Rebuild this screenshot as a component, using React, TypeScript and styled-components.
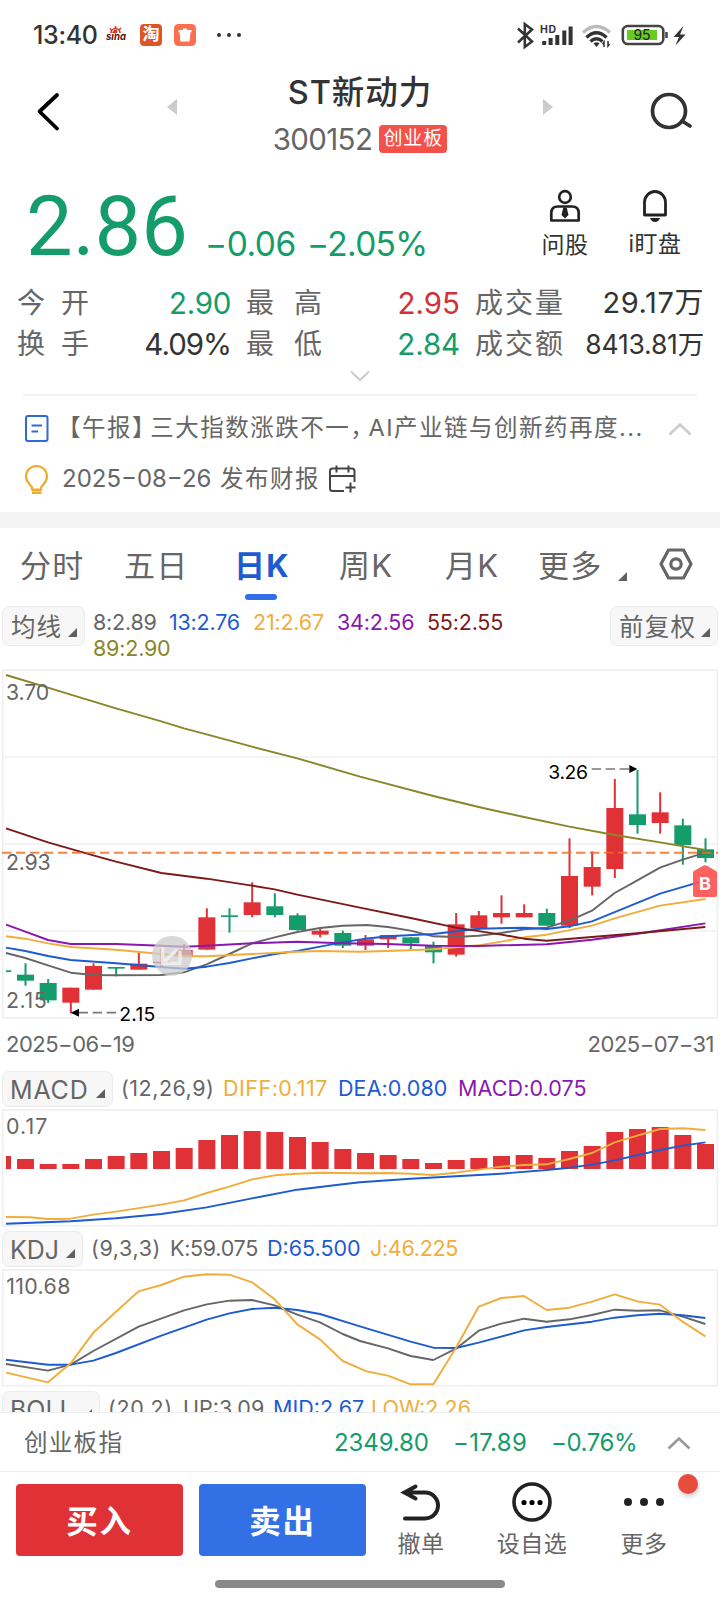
import React from "react";
import styled, { createGlobalStyle } from "styled-components";

const RED = "#e03136";
const GREEN = "#149c6a";
const BLUE = "#1d5bd0";
const ORANGE = "#f0ad3c";
const PURPLE = "#8a18b0";
const MAROON = "#7c1a1a";
const OLIVE = "#87872a";
const GRAY = "#666666";
const DARK = "#333333";

const GlobalStyle = createGlobalStyle`
  * { box-sizing: border-box; }
  html, body { margin: 0; padding: 0; background: #fff; }
  body {
    font-family: Inter, "Noto Sans CJK SC", sans-serif;
    color: ${DARK};
    overflow: hidden;
  }
  svg { display: block; flex: none; overflow: visible; }
`;

const Screen = styled.div`
  width: 720px;
  height: 1600px;
  display: flex;
  flex-direction: column;
  background: #fff;
  overflow: hidden;
`;

interface TextProps {
  $size?: number;
  $color?: string;
  $ls?: number;
  $weight?: number;
  $w?: number;
}

const Text = styled.span<TextProps>`
  display: block;
  flex: none;
  white-space: nowrap;
  font-size: ${(p) => p.$size ?? 24}px;
  line-height: 1.2;
  color: ${(p) => p.$color ?? GRAY};
  letter-spacing: ${(p) => p.$ls ?? 0}px;
  font-weight: ${(p) => p.$weight ?? 400};
  width: ${(p) => (p.$w ? `${p.$w}px` : "auto")};
`;

/* ---------- status bar ---------- */

const StatusBar = styled.div`
  flex: none;
  height: 68px;
  display: flex;
  align-items: center;
  padding: 1px 33px 0 33px;
`;
const StatusIcons = styled.div`
  display: flex;
  align-items: center;
  gap: 12px;
  margin-left: 3px;
`;
const StatusRight = styled.div`
  margin-left: auto;
  display: flex;
  align-items: center;
`;
const AppTile = styled.div`
  width: 22px;
  height: 22px;
  border-radius: 4px;
  background: #de5626;
  color: #fff;
  font-size: 17px;
  font-weight: 700;
  line-height: 20px;
  text-align: center;
`;

/* ---------- header ---------- */

const Header = styled.div`
  flex: none;
  height: 104px;
  display: grid;
  grid-template-columns: 167px 1fr 167px;
`;
const HeaderSide = styled.div<{ $right?: boolean }>`
  display: flex;
  justify-content: ${(p) => (p.$right ? "flex-end" : "flex-start")};
  padding: 22px ${(p) => (p.$right ? 25 : 0)}px 0 ${(p) => (p.$right ? 0 : 35)}px;
`;
const HeaderCenter = styled.div`
  display: flex;
  justify-content: space-between;
`;
const Pager = styled.div`
  padding-top: 30px;
`;
const TitleBlock = styled.div`
  display: flex;
  flex-direction: column;
  align-items: center;
  padding-top: 5px;
`;
const CodeRow = styled.div`
  display: flex;
  align-items: center;
  gap: 7px;
  margin-top: 10px;
`;
const BoardTag = styled.span`
  width: 68px;
  height: 28px;
  border-radius: 4px;
  background: #f4514a;
  color: #fff;
  font-size: 19px;
  letter-spacing: 0.9px;
  line-height: 28px;
  text-align: center;
  white-space: nowrap;
  margin-top: -2px;
`;

/* ---------- quote ---------- */

const Quote = styled.div`
  flex: none;
  height: 108px;
  display: flex;
  padding-left: 26px;
`;
const Price = styled.div`
  width: 179px;
  font-family: Roboto, sans-serif;
  font-size: 83px;
  line-height: 100px;
  padding-top: 5px;
  color: ${GREEN};
`;
const Change = styled.div`
  flex: 1;
  display: flex;
  padding-top: 52px;
  color: ${GREEN};
`;
const QuoteAction = styled.div<{ $w: number; $gap: number }>`
  width: ${(p) => p.$w}px;
  display: flex;
  flex-direction: column;
  align-items: center;
  gap: ${(p) => p.$gap}px;
  padding-top: 17px;
`;
const QuoteActions = styled.div`
  display: flex;
  padding-right: 20px;
`;

const Stats = styled.div`
  flex: none;
  display: grid;
  grid-template-columns: 71px 143px 15px 78px 136px 15px 90px 139px;
  grid-template-rows: 41px 41px;
  align-items: center;
  padding: 3px 16px 0 17px;
`;
const StatValue = styled(Text)`
  text-align: right;
`;

const Expand = styled.div`
  flex: none;
  height: 31px;
  margin: 0 23px;
  display: flex;
  justify-content: center;
  padding-top: 4px;
  border-bottom: 2px solid #f1f1f1;
`;

/* ---------- news ---------- */

const News = styled.div`
  flex: none;
  height: 116px;
  padding: 7px 28px 0 24px;
`;
const NewsRow = styled.div`
  height: 51px;
  display: flex;
  align-items: center;
`;
const NewsTitle = styled(Text)`
  margin-left: 8px;
`;
const HalfMark = styled.span<{ $gap: number }>`
  font-feature-settings: "halt";
  margin-right: ${(p) => p.$gap}px;
`;
const NewsToggle = styled.div`
  margin-left: auto;
`;
const ReportDate = styled(Text)`
  margin-left: 13px;
`;
const Band = styled.div`
  flex: none;
  height: 16px;
  background: #f4f4f4;
`;

/* ---------- tabs ---------- */

const Tabs = styled.div`
  flex: none;
  height: 74px;
  display: flex;
  padding-left: 20px;
`;
const Tab = styled.div<{ $w: number; $active?: boolean }>`
  width: ${(p) => p.$w}px;
  display: flex;
  flex-direction: column;
  gap: 8px;
  padding-top: 17px;
  font-size: 31px;
  line-height: 41px;
  letter-spacing: 1.2px;
  white-space: nowrap;
  font-weight: ${(p) => (p.$active ? 700 : 400)};
  color: ${(p) => (p.$active ? BLUE : GRAY)};
`;
const Underline = styled.i`
  width: 32px;
  height: 6px;
  border-radius: 3px;
  background: #3370e6;
  margin-left: 11px;
`;
const CornerMark = styled.i<{ $m?: string }>`
  flex: none;
  width: 0;
  height: 0;
  border-left: 9px solid transparent;
  border-bottom: 9px solid #5f5f5f;
  margin: ${(p) => p.$m ?? "0"};
`;

/* ---------- chart chrome ---------- */

const MaRow = styled.div`
  flex: none;
  height: 67px;
  display: flex;
  padding: 4px 2px 0 2px;
`;
const Picker = styled.div<{ $w: number; $h: number }>`
  flex: none;
  width: ${(p) => p.$w}px;
  height: ${(p) => p.$h}px;
  display: flex;
  align-items: center;
  justify-content: space-between;
  padding: 0 7px 0 8px;
  border: 1px solid #ececec;
  border-radius: 7px;
  background: #f7f7f7;
`;
const PickerLabel = styled(Text)`
  padding-top: 3px;
`;
const IndicatorLabel = styled(Text)`
  margin-left: -1px;
  padding-top: 1px;
`;
const MaValues = styled.div`
  flex: 1;
  display: flex;
  flex-wrap: wrap;
  align-content: flex-start;
  padding: 3px 60px 0 8px;
`;
const MaValue = styled(Text)`
  line-height: 26px;
`;
const Dates = styled.div`
  flex: none;
  height: 51px;
  display: flex;
  justify-content: space-between;
  padding: 12px 6px 0 6px;
`;
const IndicatorHead = styled.div<{ $top?: number }>`
  flex: none;
  height: ${(p) => 38 + (p.$top ?? 0)}px;
  display: flex;
  align-items: center;
  padding: ${(p) => p.$top ?? 0}px 0 0 2px;
`;
const IndicatorValues = styled.div`
  display: flex;
  margin-left: 8px;
`;
const Clipped = styled.div`
  flex: none;
  height: 24px;
  overflow: hidden;
`;

/* ---------- bottom ---------- */

const IndexBar = styled.div`
  flex: none;
  height: 60px;
  display: flex;
  align-items: center;
  padding: 2px 29px 0 24px;
  border-top: 1px solid #ececec;
  border-bottom: 1px solid #ececec;
`;
const IndexNumbers = styled.div`
  display: flex;
  margin-left: auto;
`;
const Actions = styled.div`
  flex: none;
  height: 97px;
  display: flex;
  padding: 12px 0 0 16px;
`;
const TradeButton = styled.div<{ $bg: string }>`
  width: 167px;
  height: 72px;
  margin-right: 16px;
  border-radius: 4px;
  background: ${(p) => p.$bg};
  color: #fff;
  font-size: 31.5px;
  font-weight: 700;
  letter-spacing: 1.8px;
  line-height: 76px;
  text-align: center;
`;
const Action = styled.div<{ $w: number }>`
  position: relative;
  width: ${(p) => p.$w}px;
  display: flex;
  flex-direction: column;
  align-items: center;
  gap: 8px;
  margin-top: -3px;
`;
const Badge = styled.i`
  position: absolute;
  left: 74px;
  top: -7px;
  width: 20px;
  height: 20px;
  border-radius: 50%;
  background: #e74c3e;
  box-shadow: 1px 3px 4px rgba(0, 0, 0, 0.18);
`;
const HomeBar = styled.div`
  flex: none;
  width: 290px;
  height: 8px;
  border-radius: 4px;
  background: #8a8a8a;
  margin: 11px 0 0 215px;
`;

/* ---------- data ---------- */

// [up, high, body top, body bottom, low] in chart units
type Candle = [boolean, number, number, number, number];
const candles: Candle[] = [
  [false, 910, 944, 962, 977],
  [false, 957, 969, 1021, 1029],
  [true, 983, 983, 1028, 1060],
  [true, 910, 918, 989, 989],
  [false, 921, 921, 926, 949],
  [true, 879, 911, 929, 929],
  [true, 865, 905, 910, 920],
  [true, 852, 870, 888, 890],
  [true, 745, 772, 869, 869],
  [false, 745, 766, 771, 818],
  [true, 667, 727, 765, 772],
  [false, 700, 739, 765, 772],
  [false, 760, 766, 810, 812],
  [true, 806, 812, 824, 832],
  [false, 812, 819, 857, 864],
  [true, 825, 838, 857, 870],
  [true, 825, 825, 838, 864],
  [false, 831, 832, 850, 868],
  [false, 845, 857, 877, 910],
  [true, 759, 793, 884, 890],
  [true, 753, 766, 805, 810],
  [true, 706, 759, 772, 791],
  [true, 733, 759, 772, 772],
  [false, 746, 759, 797, 797],
  [true, 535, 648, 797, 804],
  [true, 574, 621, 680, 706],
  [true, 357, 444, 627, 654],
  [false, 330, 463, 495, 521],
  [true, 397, 457, 489, 521],
  [false, 476, 496, 555, 614],
  [false, 535, 568, 594, 607],
];

const macdBars = [
  297, 312, 312, 297, 288, 279, 273, 264, 240, 225, 213, 216, 231, 246, 267, 279,
  285, 297, 309, 300, 294, 288, 285, 294, 273, 258, 216, 207, 201, 225, 252,
];

const centerX = (i: number) => 76.5 + 68 * i;

const maLines: [string, string][] = [
  [GRAY, "18,879 76,894 144,916 212,938 280,945 348,946 484,945 552,937 620,913 688,882 756,850 824,832 892,816 960,804 1028,797 1100,795 1164,801 1232,812 1300,829 1368,831 1436,827 1504,819 1572,808 1640,803 1708,782 1776,752 1844,699 1912,661 1980,623 2048,599 2116,578"],
  [BLUE, "18,863 76,873 144,888 212,900 348,910 484,921 552,926 620,920 688,909 756,895 824,882 892,873 960,860 1028,847 1096,836 1164,829 1300,822 1436,806 1572,803 1640,807 1708,799 1776,784 1980,701 2116,661"],
  [ORANGE, "18,829 76,836 144,850 212,861 348,869 484,882 552,889 620,889 756,882 892,875 960,873 1080,875 1232,871 1300,868 1436,856 1504,845 1572,832 1640,824 1776,797 1844,775 1980,737 2116,717"],
  [PURPLE, "18,794 76,815 144,840 212,852 348,852 484,857 552,860 620,857 756,850 892,845 1028,850 1160,852 1300,857 1436,858 1504,856 1640,853 1776,839 1912,821 2116,790"],
  [MAROON, "18,505 144,547 280,586 348,605 484,639 620,656 756,677 824,688 892,704 1080,743 1232,774 1368,803 1504,824 1572,836 1640,842 1776,831 1912,820 2116,801"],
  [OLIVE, "18,45 144,83 212,104 348,145 484,184 552,205 620,223 756,260 892,295 1080,350 1300,408 1436,441 1572,471 1708,500 1844,525 1980,547 2116,570"],
];
const diffLine =
  "18,471 90,472 144,477 212,476 280,464 348,455 484,434 552,421 620,399 688,380 756,358 824,346 892,341 960,338 1080,340 1164,339 1232,341 1300,345 1368,338 1436,329 1504,320 1572,315 1640,313 1708,297 1776,279 1844,247 1912,227 1980,207 2048,205 2116,210";
const deaLine =
  "18,491 212,484 348,475 484,462 620,442 756,415 892,389 1028,373 1080,367 1232,356 1368,349 1504,341 1640,330 1708,323 1776,314 1844,301 1980,270 2048,257 2116,247";
const kLine =
  "18,912 144,932 212,914 280,873 416,800 552,751 620,733 688,722 756,720 824,736 892,764 960,787 1028,822 1080,843 1164,865 1232,888 1300,900 1368,866 1436,812 1504,791 1572,776 1640,785 1708,778 1776,765 1844,749 1912,752 1980,751 2048,770 2116,792";
const dLine =
  "18,899 144,914 212,914 280,902 348,879 484,827 620,779 688,760 756,747 824,743 892,750 960,762 1080,799 1232,845 1300,863 1368,864 1436,848 1572,811 1640,801 1776,785 1844,773 1912,766 1980,761 2048,766 2116,774";
const jLine =
  "18,938 144,967 212,910 280,818 348,755 416,694 484,675 552,650 620,643 688,644 756,667 824,718 892,793 960,838 1028,903 1100,934 1164,947 1232,973 1300,973 1368,863 1436,740 1504,714 1572,708 1640,750 1708,743 1776,725 1844,703 1912,724 1980,734 2048,785 2116,829";

/* ---------- chart pieces ---------- */

const Frame = ({ y, h }: { y: number; h: number }) => (
  <rect x={8} y={y} width={2144} height={h} fill="none" stroke="#f0f0f0" strokeWidth={5} />
);

const Line = ({ color, points }: { color: string; points: string }) => (
  <polyline points={points} fill="none" stroke={color} strokeWidth={5.8} strokeLinejoin="round" />
);

const AxisText = ({ x, y, w, children, black }: { x: number; y: number; w: number; children: string; black?: boolean }) => (
  <text x={x} y={y} textLength={w} fontSize={black ? 58 : 64} fill={black ? "#000" : GRAY}>
    {children}
  </text>
);

const PriceChart = () => (
  <svg width="720" height="350" viewBox="0 27 2160 1050">
    <Frame y={30} h={1044} />
    {[291, 552, 813].map((y) => (
      <path key={y} d={`M10 ${y}H2150`} stroke="#f0f0f0" strokeWidth={5} />
    ))}
    <rect x={18} y={931} width={16} height={5} fill={GREEN} />
    {candles.map(([up, high, top, bottom, low], i) => (
      <g key={i} fill={up ? RED : GREEN}>
        <rect x={centerX(i) - 3} y={high} width={6} height={low - high} />
        <rect x={centerX(i) - 25.5} y={top} width={51} height={bottom - top} />
      </g>
    ))}
    {maLines.map(([c, p]) => (
      <Line key={c} color={c} points={p} />
    ))}
    <path d="M6 578.500H2154" stroke="#f26a1d" strokeOpacity={0.82} strokeWidth={6} strokeDasharray="28 14" />
    <circle cx={516} cy={887} r={60} fill="#cccccc" fillOpacity={0.75} />
    <path d="M492 906L532 868M488 862V910H540V872" stroke="#f4f4f4" strokeWidth={10} fill="none" strokeOpacity={0.75} />
    <AxisText x={18} y={120} w={130}>3.70</AxisText>
    <AxisText x={18} y={629} w={134}>2.93</AxisText>
    <AxisText x={18} y={1044} w={122}>2.15</AxisText>
    <path d="M236 1058H352" stroke="#777" strokeWidth={5} strokeDasharray="28 14" />
    <path d="M212 1058L237 1046V1070Z" />
    <AxisText x={358} y={1082} w={108} black>2.15</AxisText>
    <path d="M1775 327H1890" stroke="#777" strokeWidth={5} strokeDasharray="28 14" />
    <path d="M1912 327L1888 315V339Z" />
    <AxisText x={1645} y={357} w={119} black>3.26</AxisText>
    <path d="M2079 638Q2079 634 2083 632L2109 617Q2115 614 2121 617L2147 632Q2151 634 2151 638V705Q2151 711 2145 711H2085Q2079 711 2079 705Z" fill="#ff5555" fillOpacity={0.93} />
    <text x={2115} y={689} textAnchor="middle" fontSize={54} fontWeight={700} fill="#fff">B</text>
  </svg>
);

const MacdChart = () => (
  <svg width="720" height="120" viewBox="0 144 2160 360">
    <Frame y={150} h={347} />
    <rect x={18} y={288} width={15} height={39} fill={RED} />
    {macdBars.map((top, i) => (
      <rect key={i} x={centerX(i) - 25.5} y={top} width={51} height={327 - top} fill={RED} />
    ))}
    <Line color={ORANGE} points={diffLine} />
    <Line color={BLUE} points={deaLine} />
    <AxisText x={18} y={222} w={124}>0.17</AxisText>
  </svg>
);

const KdjChart = () => (
  <svg width="720" height="120" viewBox="0 624 2160 360">
    <Frame y={630} h={347} />
    <Line color={GRAY} points={kLine} />
    <Line color={BLUE} points={dLine} />
    <Line color={ORANGE} points={jLine} />
    <AxisText x={19} y={702} w={192}>110.68</AxisText>
  </svg>
);

/* ---------- icons ---------- */

const Chevron = ({ up, color }: { up?: boolean; color: string }) => (
  <svg width="24" height="14" viewBox="0 0 24 14">
    <path d={up ? "M1.5 12.5L12 2.5L22.5 12.5" : "M3 2.5L12 11L21 2.5"} fill="none" stroke={color} strokeWidth={up ? 2.6 : 2} />
  </svg>
);

const SinoIcon = () => (
  <svg width="22" height="24" viewBox="0 0 22 24">
    <path d="M5 10a4.500 4.500 0 0 1 9 0M4 5.500l2 2M9.500 3v3M15 5l-2 2" fill="none" stroke="#d8352a" strokeWidth="1.600" />
    <circle cx="9.500" cy="8.500" r="2" fill="#d8352a" />
    <text x="0" y="17" fontSize="10" fontWeight="700" fontStyle="italic" textLength="20" lengthAdjust="spacingAndGlyphs" fill="#5a1010">sina</text>
  </svg>
);

const TrashTile = () => (
  <svg width="22" height="22" viewBox="0 0 22 22">
    <rect width="22" height="22" rx="4.500" fill="#fb7150" />
    <path d="M4.500 6H9V4.500h4V6h4.500v2.200H16.500L15.500 17.500H6.500L5.500 8.200H4.500Z" fill="#fff" />
  </svg>
);

const StatusGlyphs = () => (
  <svg width="172" height="30" viewBox="516 19 172 30">
    <path d="M519 27.500L533 40.500L525.800 46V23L533 28.500L519 41.500" fill="none" stroke={DARK} strokeWidth="2.500" />
    <text x="541" y="32" fontSize="10.500" fontWeight="700" textLength="16" fill={DARK}>HD</text>
    <path d="M545.200 44v-4M551.600 44v-7M558.300 44v-10M565.300 44v-14.500M571.600 44V25.500" stroke={DARK} strokeWidth="4" />
    <path d="M584 31.500Q597.500 19.500 611 31.500" fill="none" stroke="#bbb" strokeWidth="3.200" />
    <path d="M587.500 36.500Q597.500 27 607.500 36.500M591.500 40.500Q597.500 35 603.500 40.500" fill="none" stroke={DARK} strokeWidth="3.400" />
    <path d="M594.500 42.500Q597.500 40 600.500 42.500L597.500 46Z" fill={DARK} />
    <path d="M605 46v-5l-1.500 2M609 40v5l1.500-2" fill="none" stroke={DARK} strokeWidth="1.500" />
    <rect x="623.800" y="25" width="40.500" height="18" rx="5" fill="none" stroke="#444" strokeWidth="2.600" />
    <rect x="628" y="29" width="30" height="10" fill="#67cb22" />
    <text x="643" y="38.800" textAnchor="middle" fontSize="14" fill="#222" textLength="17">95</text>
    <path d="M667.500 31v6" stroke="#444" strokeWidth="2.500" />
    <path d="M684.500 25L674.500 36H680L676.500 44.500L686.500 33.500H681Z" fill={DARK} />
  </svg>
);

const PersonIcon = () => (
  <svg width="32" height="34" viewBox="0 0 32 34" fill="none" stroke="#222" strokeWidth="2.700">
    <circle cx="16" cy="8" r="5.800" />
    <path d="M2.300 31.500V24Q2.300 17.500 9 17.500H23Q29.700 17.500 29.700 24V31.500Z" strokeLinejoin="round" />
    <path d="M14.300 18.500h3.400l1.800 7.500-3.500 3.500-3.500-3.500Z" fill="#222" stroke="none" />
  </svg>
);

const BellIcon = () => (
  <svg width="32" height="34" viewBox="0 0 32 34">
    <path d="M5.500 26V13.500A10.500 11 0 0 1 26.500 13.500V26Z" fill="none" stroke="#222" strokeWidth="2.800" strokeLinejoin="round" />
    <path d="M11 29H21Q19.500 33 16 33T11 29Z" fill="#222" />
  </svg>
);

const DocIcon = () => (
  <svg width="25" height="29" viewBox="0 0 25 29" fill="none" stroke="#2f6bd8" strokeWidth="2">
    <rect x="2" y="2" width="21.500" height="25" rx="2" />
    <path d="M7.500 11.500h10.500M7.500 17.500h6.500" />
  </svg>
);

const BulbIcon = () => (
  <svg width="25" height="30" viewBox="0 0 25 30" fill="none" stroke="#f0ab2e" strokeWidth="2.200">
    <path d="M8 24.500V22.500C6.500 19.500 2 17.500 2 11.500A10.500 10.500 0 0 1 23 11.500C23 17.500 18.500 19.500 17 22.500V24.500Z" />
    <path d="M8 25.500h9.500M8 28h9.500" />
  </svg>
);

const CalendarIcon = () => (
  <svg width="28" height="29" viewBox="0 0 28 29" fill="none" stroke="#444" strokeWidth="2">
    <path d="M16 26H4.500Q2 26 2 23.500V6Q2 3.500 4.500 3.500H24Q26.500 3.500 26.500 6V17M2 11H26.500M8.500 .5v7M20.500 .5v7M22.500 17.500v10M17.500 22.500h10" />
  </svg>
);

const App = () => (
  <>
    <GlobalStyle />
    <Screen>
      <StatusBar>
        <Text $size={25} $color={DARK} $w={70} $ls={-0.3} $weight={500}>13:40</Text>
        <StatusIcons>
          <SinoIcon />
          <AppTile>淘</AppTile>
          <TrashTile />
          <svg width="44" height="8" viewBox="0 0 44 8" fill={DARK}>
            <circle cx="11" cy="4" r="2" />
            <circle cx="21" cy="4" r="2" />
            <circle cx="31" cy="4" r="2" />
          </svg>
        </StatusIcons>
        <StatusRight>
          <StatusGlyphs />
        </StatusRight>
      </StatusBar>

      <Header>
        <HeaderSide>
          <svg width="26" height="42" viewBox="0 0 26 42">
            <path d="M22 5L4.500 21.500L22 38.500" fill="none" stroke="#000" strokeWidth="3.800" strokeLinecap="round" strokeLinejoin="round" />
          </svg>
        </HeaderSide>
        <HeaderCenter>
          <Pager>
            <svg width="10" height="18" viewBox="0 0 10 18"><path d="M10 1V17L0 9Z" fill="#ccc" /></svg>
          </Pager>
          <TitleBlock>
            <Text $size={32.500} $color={DARK} $ls={1} $weight={500}>ST新动力</Text>
            <CodeRow>
              <Text $size={29.500} $ls={-0.65}>300152</Text>
              <BoardTag>创业板</BoardTag>
            </CodeRow>
          </TitleBlock>
          <Pager>
            <svg width="10" height="18" viewBox="0 0 10 18"><path d="M0 1V17L10 9Z" fill="#ccc" /></svg>
          </Pager>
        </HeaderCenter>
        <HeaderSide $right>
          <svg width="46" height="42" viewBox="0 0 46 42" fill="none" stroke={DARK} strokeWidth="3.700">
            <circle cx="20" cy="21" r="16.500" />
            <path d="M33 31L41 36" strokeLinecap="round" />
          </svg>
        </HeaderSide>
      </Header>

      <Quote>
        <Price>2.86</Price>
        <Change>
          <Text $size={33.500} $color={GREEN} $ls={-0.5} $w={102}>−0.06</Text>
          <Text $size={33.500} $color={GREEN} $ls={-0.7}>−2.05%</Text>
        </Change>
        <QuoteActions>
          <QuoteAction $w={90} $gap={9}>
            <PersonIcon />
            <Text $size={23} $color={DARK} $ls={0.5}>问股</Text>
          </QuoteAction>
          <QuoteAction $w={90} $gap={8}>
            <BellIcon />
            <Text $size={23} $color={DARK} $ls={0.5}>i盯盘</Text>
          </QuoteAction>
        </QuoteActions>
      </Quote>

      <Stats>
        <Text $size={28} $ls={16}>今开</Text>
        <StatValue $size={29.500} $color={GREEN} $ls={-0.3}>2.90</StatValue>
        <span />
        <Text $size={28} $ls={20}>最高</Text>
        <StatValue $size={29.500} $color="#cf3338" $ls={0}>2.95</StatValue>
        <span />
        <Text $size={28} $ls={2}>成交量</Text>
        <StatValue $size={29} $color={DARK} $ls={0.6}>29.17万</StatValue>
        <Text $size={28} $ls={16}>换手</Text>
        <StatValue $size={29.500} $color={DARK} $ls={-1}>4.09%</StatValue>
        <span />
        <Text $size={28} $ls={20}>最低</Text>
        <StatValue $size={29.500} $color={GREEN} $ls={-0.1}>2.84</StatValue>
        <span />
        <Text $size={28} $ls={2}>成交额</Text>
        <StatValue $size={26.500} $color={DARK} $ls={-0.2}>8413.81万</StatValue>
      </Stats>
      <Expand>
        <Chevron color="#ccc" />
      </Expand>

      <News>
        <NewsRow>
          <DocIcon />
          <NewsTitle $size={23.500} $ls={1.5}>
            【午报<HalfMark $gap={5}>】</HalfMark>三大指数涨跌不一<HalfMark $gap={5}>，</HalfMark>AI产业链与创新药再度...
          </NewsTitle>
          <NewsToggle>
            <Chevron up color="#ccc" />
          </NewsToggle>
        </NewsRow>
        <NewsRow>
          <BulbIcon />
          <ReportDate $size={24} $w={145}>2025−08−26</ReportDate>
          <ReportDate $size={23.500} $ls={1.500} $w={108}>发布财报</ReportDate>
          <CalendarIcon />
        </NewsRow>
      </News>
      <Band />

      <Tabs>
        <Tab $w={104}>分时</Tab>
        <Tab $w={110}>五日</Tab>
        <Tab $w={105} $active>
          日K
          <Underline />
        </Tab>
        <Tab $w={106}>周K</Tab>
        <Tab $w={93}>月K</Tab>
        <Tab $w={80}>更多</Tab>
        <CornerMark $m="44px 31px 0 0" />
        <svg width="36" height="72" viewBox="0 0 36 72" fill="none" stroke={GRAY} strokeWidth="3.200">
          <path d="M10.500 22H25.500L33 36L25.500 50H10.500L3 36Z" strokeLinejoin="round" />
          <circle cx="18" cy="36" r="5.200" />
        </svg>
      </Tabs>

      <MaRow>
        <Picker $w={83} $h={40}>
          <PickerLabel $size={24.500} $ls={1}>均线</PickerLabel>
          <CornerMark $m="12px 0 0 0" />
        </Picker>
        <MaValues>
          <MaValue $size={21.500} $ls={-0.2} $w={76}>8:2.89</MaValue>
          <MaValue $size={21.500} $ls={-0.2} $color={BLUE} $w={84}>13:2.76</MaValue>
          <MaValue $size={21.500} $ls={-0.2} $color={ORANGE} $w={84}>21:2.67</MaValue>
          <MaValue $size={21.500} $ls={-0.2} $color={PURPLE} $w={90}>34:2.56</MaValue>
          <MaValue $size={21.500} $ls={-0.2} $color={MAROON}>55:2.55</MaValue>
          <MaValue $size={21.500} $ls={-0.2} $color={OLIVE}>89:2.90</MaValue>
        </MaValues>
        <Picker $w={108} $h={40}>
          <PickerLabel $size={24.500} $ls={1.300}>前复权</PickerLabel>
          <CornerMark $m="12px 0 0 0" />
        </Picker>
      </MaRow>

      <PriceChart />
      <Dates>
        <Text $size={22} $ls={-0.5}>2025−06−19</Text>
        <Text $size={22} $ls={-0.5}>2025−07−31</Text>
      </Dates>

      <IndicatorHead>
        <Picker $w={111} $h={36}>
          <IndicatorLabel $size={25} $ls={0.800}>MACD</IndicatorLabel>
          <CornerMark $m="9px 0 0 0" />
        </Picker>
        <IndicatorValues>
          <Text $size={21.500} $ls={0.500} $w={102}>(12,26,9)</Text>
          <Text $size={21.500} $ls={0.500} $color={ORANGE} $w={115}>DIFF:0.117</Text>
          <Text $size={21.500} $ls={0.100} $color={BLUE} $w={120}>DEA:0.080</Text>
          <Text $size={21.500} $ls={0.100} $color={PURPLE}>MACD:0.075</Text>
        </IndicatorValues>
      </IndicatorHead>
      <MacdChart />
      <IndicatorHead $top={2}>
        <Picker $w={81} $h={36}>
          <IndicatorLabel $size={25}>KDJ</IndicatorLabel>
          <CornerMark $m="9px 0 0 0" />
        </Picker>
        <IndicatorValues>
          <Text $size={21.500} $ls={0.600} $w={79}>(9,3,3)</Text>
          <Text $size={21.500} $ls={-0.300} $w={97}>K:59.075</Text>
          <Text $size={21.500} $color={BLUE} $w={103}>D:65.500</Text>
          <Text $size={21.500} $ls={-0.300} $color={ORANGE}>J:46.225</Text>
        </IndicatorValues>
      </IndicatorHead>
      <KdjChart />
      <Clipped>
        <IndicatorHead $top={2}>
          <Picker $w={98} $h={36}>
            <IndicatorLabel $size={25}>BOLL</IndicatorLabel>
            <CornerMark $m="9px 0 0 0" />
          </Picker>
          <IndicatorValues>
            <Text $size={21.500} $ls={0.600} $w={75}>(20,2)</Text>
            <Text $size={21.500} $w={90}>UP:3.09</Text>
            <Text $size={21.500} $color={BLUE} $w={98}>MID:2.67</Text>
            <Text $size={21.500} $color={ORANGE}>LOW:2.26</Text>
          </IndicatorValues>
        </IndicatorHead>
      </Clipped>

      <IndexBar>
        <Text $size={23.500} $ls={1.300}>创业板指</Text>
        <IndexNumbers>
          <Text $size={24} $color={GREEN} $ls={-0.100} $w={119}>2349.80</Text>
          <Text $size={24} $color={GREEN} $ls={0.300} $w={98}>−17.89</Text>
          <Text $size={24} $color={GREEN} $ls={-0.400} $w={116}>−0.76%</Text>
        </IndexNumbers>
        <Chevron up color="#999" />
      </IndexBar>

      <Actions>
        <TradeButton $bg={RED}>买入</TradeButton>
        <TradeButton $bg="#3370e6">卖出</TradeButton>
        <Action $w={78}>
          <svg width="42" height="42" viewBox="0 0 42 42" fill="none" stroke="#222" strokeWidth="4" strokeLinecap="round">
            <path d="M4 11.500H25A13 13 0 0 1 25 37.500H5M15.500 5.500L4.500 11.500L15.500 17.500" />
          </svg>
          <Text $size={23} $ls={0.500}>撤单</Text>
        </Action>
        <Action $w={144}>
          <svg width="42" height="42" viewBox="0 0 42 42">
            <circle cx="21" cy="21" r="18" fill="none" stroke="#222" strokeWidth="3.600" />
            <circle cx="13" cy="21.500" r="2.600" />
            <circle cx="21" cy="21.500" r="2.600" />
            <circle cx="29" cy="21.500" r="2.600" />
          </svg>
          <Text $size={23} $ls={0.500}>设自选</Text>
        </Action>
        <Action $w={80}>
          <svg width="42" height="42" viewBox="0 0 42 42" fill="#222">
            <circle cx="5" cy="21" r="4" />
            <circle cx="21" cy="21" r="4" />
            <circle cx="37" cy="21" r="4" />
          </svg>
          <Text $size={23} $ls={0.500}>更多</Text>
          <Badge />
        </Action>
      </Actions>
      <HomeBar />
    </Screen>
  </>
);

export default App;
